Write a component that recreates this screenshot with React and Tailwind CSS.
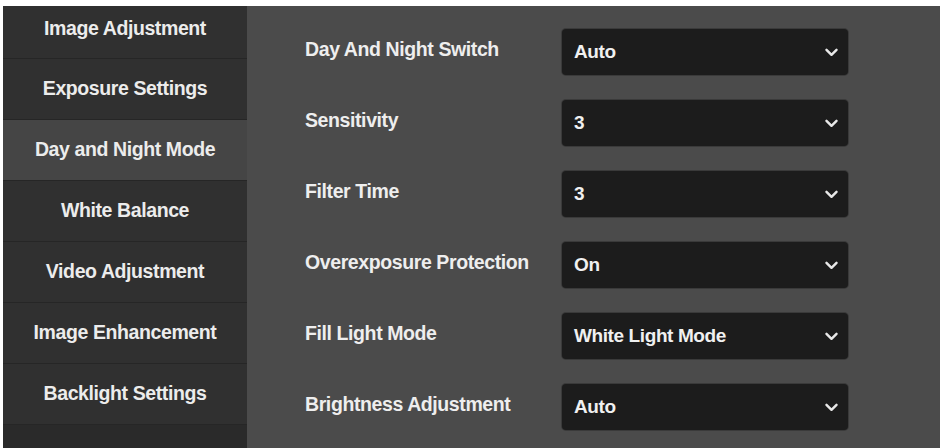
import React from "react"

const menu = [
  "Image Adjustment",
  "Exposure Settings",
  "Day and Night Mode",
  "White Balance",
  "Video Adjustment",
  "Image Enhancement",
  "Backlight Settings",
]

const fields = [
  { label: "Day And Night Switch", value: "Auto" },
  { label: "Sensitivity", value: "3" },
  { label: "Filter Time", value: "3" },
  { label: "Overexposure Protection", value: "On" },
  { label: "Fill Light Mode", value: "White Light Mode" },
  { label: "Brightness Adjustment", value: "Auto" },
]

function Chevron() {
  return (
    <svg width="13" height="9" viewBox="0 0 13 9" className="text-[#e8e8e8]">
      <path d="M1.5 1.8 L6.5 6.8 L11.5 1.8" fill="none" stroke="currentColor" strokeWidth="2.4" strokeLinecap="round" strokeLinejoin="round" />
    </svg>
  )
}

function SelectBox({ value }) {
  return (
    <div className="w-[286px] h-[46px] rounded-[4px] bg-[#1c1c1c] flex items-center justify-between pl-[12px] pr-[10px] shadow-[0_0_0_1px_#3a3a3a]">
      <span className="text-[19px] font-bold text-[#f0f0f0] tracking-[-0.4px]">{value}</span>
      <Chevron />
    </div>
  )
}

export default function App() {
  return (
    <div
      className="w-[945px] h-[448px] bg-white pt-[6px] pl-[3px] pr-[5px] flex overflow-hidden"
      style={{ fontFamily: '"Liberation Sans", Arial, sans-serif' }}
    >
      {/* menu */}
      <div className="w-[244px] h-full bg-[#2a2a2a] flex flex-col">
        {menu.map((m, i) => (
          <div
            key={m}
            className={
              "flex items-center justify-center shrink-0 border-b border-[#262626] text-[19.5px] font-bold text-[#ececec] tracking-[-0.4px] " +
              (i === 0 ? "h-[53px] pb-[6px] " : "h-[61px] ") +
              (i === 2 ? "bg-[#454545]" : "bg-[#303030]")
            }
          >
            {m}
          </div>
        ))}
        <div className="flex-1 bg-[#2a2a2a]" />
      </div>

      {/* settings */}
      <div className="flex-1 h-full bg-[#4b4b4b] pl-[58px] pt-[23px] flex flex-col gap-[25px]">
        {fields.map(f => (
          <div key={f.label} className="flex items-center h-[46px]">
            <div className="w-[257px] text-[19.5px] font-bold text-[#eeeeee] tracking-[-0.4px] -mt-[5px]">{f.label}</div>
            <SelectBox value={f.value} />
          </div>
        ))}
      </div>
    </div>
  )
}
